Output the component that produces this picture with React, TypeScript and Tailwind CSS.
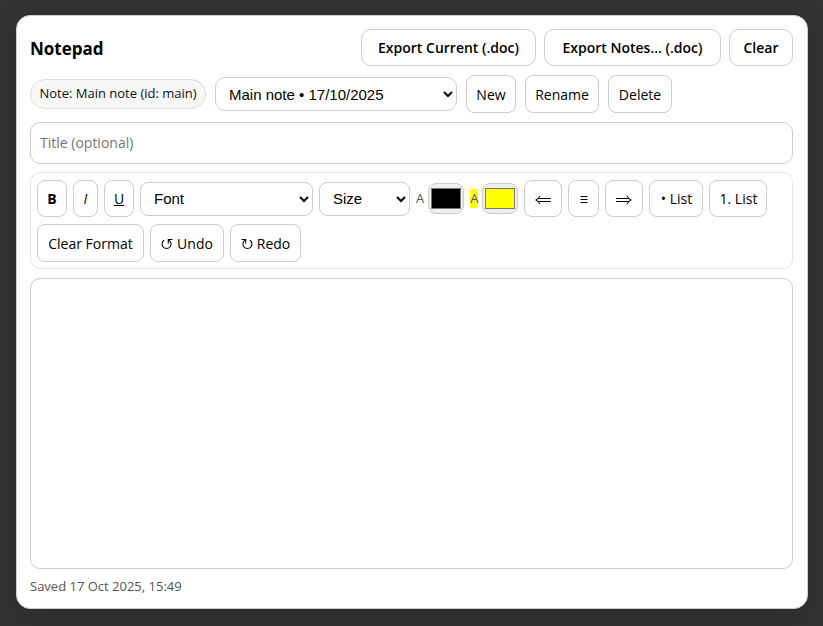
import React from 'react';
import clsx from 'clsx';

const controlBase = 'flex shrink-0 items-center justify-center border border-[#cccccc] bg-white pt-px whitespace-nowrap text-black';

const HeaderButton: React.FC<{ label: string; className: string }> = ({ label, className }) => (
    <button type="button" className={clsx(controlBase, 'h-[37px] rounded-[10px] text-sm font-semibold', className)}>
        {label}
    </button>
);

const ToolButton: React.FC<{ children: React.ReactNode; className: string; title?: string }> = ({ children, className, title }) => (
    <button type="button" title={title} aria-label={title} className={clsx(controlBase, 'gap-1 rounded-lg text-sm', className)}>
        {children}
    </button>
);

const Select: React.FC<{ label: string; options: string[]; className: string }> = ({ label, options, className }) => (
    <select
        aria-label={label}
        className={clsx('h-[34px] shrink-0 border border-[#cccccc] bg-white px-[9px] font-["Liberation_Sans",sans-serif] text-[15px] text-black', className)}
    >
        {options.map(option => (
            <option key={option}>{option}</option>
        ))}
    </select>
);

const ColorInput: React.FC<{ id: string; value: string }> = ({ id, value }) => (
    <input id={id} type="color" defaultValue={value} className="h-[31px] w-9 shrink-0 rounded-lg border border-[#cccccc] bg-[#efefef] p-0" />
);

const ArrowIcon: React.FC<{ flip?: boolean }> = ({ flip }) => (
    <svg width="16" height="10" viewBox="0 0 16 10" fill="none" stroke="currentColor" className={clsx('mt-px', flip && '-scale-x-100')}>
        <path d="M2.5 3.5H16M2.5 6.5H16" />
        <path d="M5 .8C4 2.8 2.8 4.2.7 5 2.8 5.8 4 7.2 5 9.2" />
    </svg>
);

const CenterIcon: React.FC = () => (
    <svg width="8" height="9" viewBox="0 0 8 9" fill="none" stroke="currentColor">
        <path d="M.5 1.5h7M.5 4.5h7M.5 7.5h7" />
    </svg>
);

const TurnIcon: React.FC<{ flip?: boolean }> = ({ flip }) => (
    <svg width="12" height="12" viewBox="0 0 12 12" fill="none" stroke="currentColor" strokeWidth="1.1" className={clsx(flip && '-scale-x-100')}>
        <path d="M3 2.2C.8 3.8.4 7 2.2 9c1.8 2 5 2 6.8 0 1.9-2.2 1.2-5.5-1.6-7.2" />
        <path d="M11.5 1.5H7.3v4" />
    </svg>
);

const App: React.FC = () => {
    return (
        <div className="flex min-h-screen flex-col bg-[#333333] pt-[15px] pr-[15px] pb-[17px] pl-4 font-['Open_Sans','Noto_Sans',sans-serif] text-[#111111]">
            <main className="flex flex-1 flex-col rounded-[14px] border border-[#cccccc] bg-white py-[13px] pr-[14px] pl-[13px] shadow-[0_10px_30px_rgba(0,0,0,0.15)]">
                <header className="flex items-center justify-between">
                    <h1 className="pt-[2px] text-[17px] font-bold text-black">Notepad</h1>
                    <div className="flex gap-2">
                        <HeaderButton label="Export Current (.doc)" className="w-[175px]" />
                        <HeaderButton label="Export Notes... (.doc)" className="w-[177px]" />
                        <HeaderButton label="Clear" className="w-16" />
                    </div>
                </header>

                <div className="mt-[9px] flex flex-wrap items-center gap-[9px]">
                    <span className="flex h-[30px] w-44 items-center justify-center rounded-full border border-[#dddddd] bg-[#f7f7f7] text-[13px] whitespace-nowrap">
                        Note: Main note (id: main)
                    </span>
                    <Select label="Note" options={['Main note • 17/10/2025']} className="w-[242px] rounded-[10px]" />
                    <ToolButton className="h-[38px] w-[50px]">New</ToolButton>
                    <ToolButton className="h-[38px] w-[74px]">Rename</ToolButton>
                    <ToolButton className="h-[38px] w-16">Delete</ToolButton>
                </div>

                <input
                    type="text"
                    aria-label="Title"
                    placeholder="Title (optional)"
                    className="mt-[9px] h-[42px] w-full rounded-[10px] border border-[#cccccc] px-[9px] pb-[2px] text-sm placeholder:text-[#757575]"
                />

                <div role="toolbar" aria-label="Formatting" className="mt-2 flex flex-wrap items-center gap-x-[6px] gap-y-[7px] rounded-[10px] border border-[#e5e5e5] px-[6px] pt-[7px] pb-[6px]">
                    <ToolButton title="Bold" className="h-[37px] w-[30px] font-bold">B</ToolButton>
                    <ToolButton title="Italic" className="h-[37px] w-[25px] italic">I</ToolButton>
                    <ToolButton title="Underline" className="h-[37px] w-[30px] underline">U</ToolButton>
                    <Select label="Font" options={['Font', 'Arial', 'Georgia', 'Verdana']} className="w-[173px] rounded-lg" />
                    <Select label="Size" options={['Size', 'Small', 'Normal', 'Large']} className="w-[91px] rounded-lg" />
                    <div className="flex items-center gap-1">
                        <label htmlFor="text-color" className="text-[13px] leading-[19px] text-[#555555]">A</label>
                        <ColorInput id="text-color" value="#000000" />
                    </div>
                    <div className="flex items-center gap-1">
                        <label htmlFor="highlight-color" className="bg-[#ffff00] text-[13px] leading-[19px] text-[#555555]">A</label>
                        <ColorInput id="highlight-color" value="#ffff00" />
                    </div>
                    <ToolButton title="Align left" className="h-[37px] w-[38px]"><ArrowIcon /></ToolButton>
                    <ToolButton title="Align center" className="h-[37px] w-[31px]"><CenterIcon /></ToolButton>
                    <ToolButton title="Align right" className="h-[37px] w-[38px]"><ArrowIcon flip /></ToolButton>
                    <ToolButton className="h-[37px] w-[54px]">• List</ToolButton>
                    <ToolButton className="h-[37px] w-[58px]">1. List</ToolButton>
                    <ToolButton className="h-[38px] w-[107px]">Clear Format</ToolButton>
                    <ToolButton className="h-[38px] w-[74px]"><TurnIcon />Undo</ToolButton>
                    <ToolButton className="h-[38px] w-[71px]"><TurnIcon flip />Redo</ToolButton>
                </div>

                <textarea aria-label="Note text" className="mt-[9px] block w-full flex-1 resize-none rounded-[10px] border border-[#cccccc] p-3 text-sm" />

                <p className="mt-[9px] text-[13px] leading-[17px] text-[#555555]">Saved 17 Oct 2025, 15:49</p>
            </main>
        </div>
    );
};

export default App;
